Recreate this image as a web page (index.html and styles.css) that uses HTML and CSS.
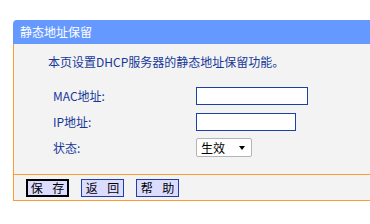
FILE: index.html
```html
<!DOCTYPE html>
<html lang="zh-CN">
<head>
    <meta charset="UTF-8">
    <title>静态地址保留</title>
    <link rel="stylesheet" href="styles.css">
</head>
<body>
    <div class="panel">
        <div class="panel-title">静态地址保留</div>
        <div class="panel-body">
            <div class="form-area">
                <p class="intro">本页设置DHCP服务器的静态地址保留功能。</p>
                <div class="form-grid">
                    <label class="label" for="mac">MAC地址:</label>
                    <input class="field field-mac" id="mac" type="text">

                    <label class="label" for="ip">IP地址:</label>
                    <input class="field field-ip" id="ip" type="text">

                    <label class="label" for="state">状态:</label>
                    <span class="select-wrap">
                        <select class="select" id="state">
                            <option>生效</option>
                            <option>失效</option>
                        </select>
                        <span class="select-arrow"></span>
                    </span>
                </div>
            </div>
            <div class="actions">
                <button class="btn btn-focus" type="button">保 存</button>
                <button class="btn" type="button">返 回</button>
                <button class="btn" type="button">帮 助</button>
            </div>
        </div>
    </div>
</body>
</html>
```

FILE: styles.css
```css
* {
    margin: 0;
    padding: 0;
    box-sizing: border-box;
}

body {
    background: #ffffff;
    overflow: hidden;
    font-family: "Noto Sans CJK SC", sans-serif;
    font-size: 12px;
}

/* panel runs on past the right edge of the window, no right border */
.panel {
    margin: 20px 0 0 13px;
    width: calc(100% - 13px);
}

.panel-title {
    height: 24px;
    line-height: 24px;
    padding-left: 7px;
    background: #6699ff;
    border-top-left-radius: 4px;
    color: #ffffff;
    font-size: 12px;
}

.panel-body {
    background: #f3f3f3;
    border-left: 1px solid #ff9933;
    border-bottom: 1px solid #ff9933;
}

.form-area {
    height: 131px;
    padding: 10px 0 0 34px;
    border-bottom: 1px solid #ff9933;
    color: #17389a;
}

.intro {
    line-height: 16px;
    margin-bottom: 17px;
}

.form-grid {
    display: grid;
    grid-template-columns: 143px auto;
    row-gap: 8px;
    align-items: center;
    padding-left: 5px;
}

.label {
    line-height: 18px;
}

.field {
    height: 18px;
    border: 1px solid #1c3fa8;
    background: #ffffff;
    outline: none;
}

.field-mac {
    width: 112px;
}

.field-ip {
    width: 100px;
}

.select-wrap {
    position: relative;
    display: inline-block;
    width: 56px;
    height: 19px;
    margin-top: -1px;
}

.select {
    appearance: none;
    -webkit-appearance: none;
    width: 100%;
    height: 100%;
    padding-left: 4px;
    border: 1px solid #b4b4b4;
    border-radius: 2px;
    background: #ffffff;
    color: #000000;
    font-family: "Noto Sans CJK SC", sans-serif;
    font-size: 12px;
    outline: none;
}

.select-arrow {
    position: absolute;
    right: 7px;
    top: 8px;
    width: 0;
    height: 0;
    border-left: 3.5px solid transparent;
    border-right: 3.5px solid transparent;
    border-top: 4px solid #000000;
    pointer-events: none;
}

.actions {
    height: 25px;
    display: flex;
    align-items: center;
    gap: 12px;
    padding-left: 12px;
}

.btn {
    width: 43px;
    height: 18px;
    border: 1px solid #1c3fa8;
    background: #dcdcff;
    color: #000000;
    font-family: "Noto Sans CJK SC", sans-serif;
    font-size: 12px;
    line-height: 14px;
    word-spacing: 7px;
    cursor: pointer;
}

.btn-focus {
    border: 2px solid #000000;
}
```
